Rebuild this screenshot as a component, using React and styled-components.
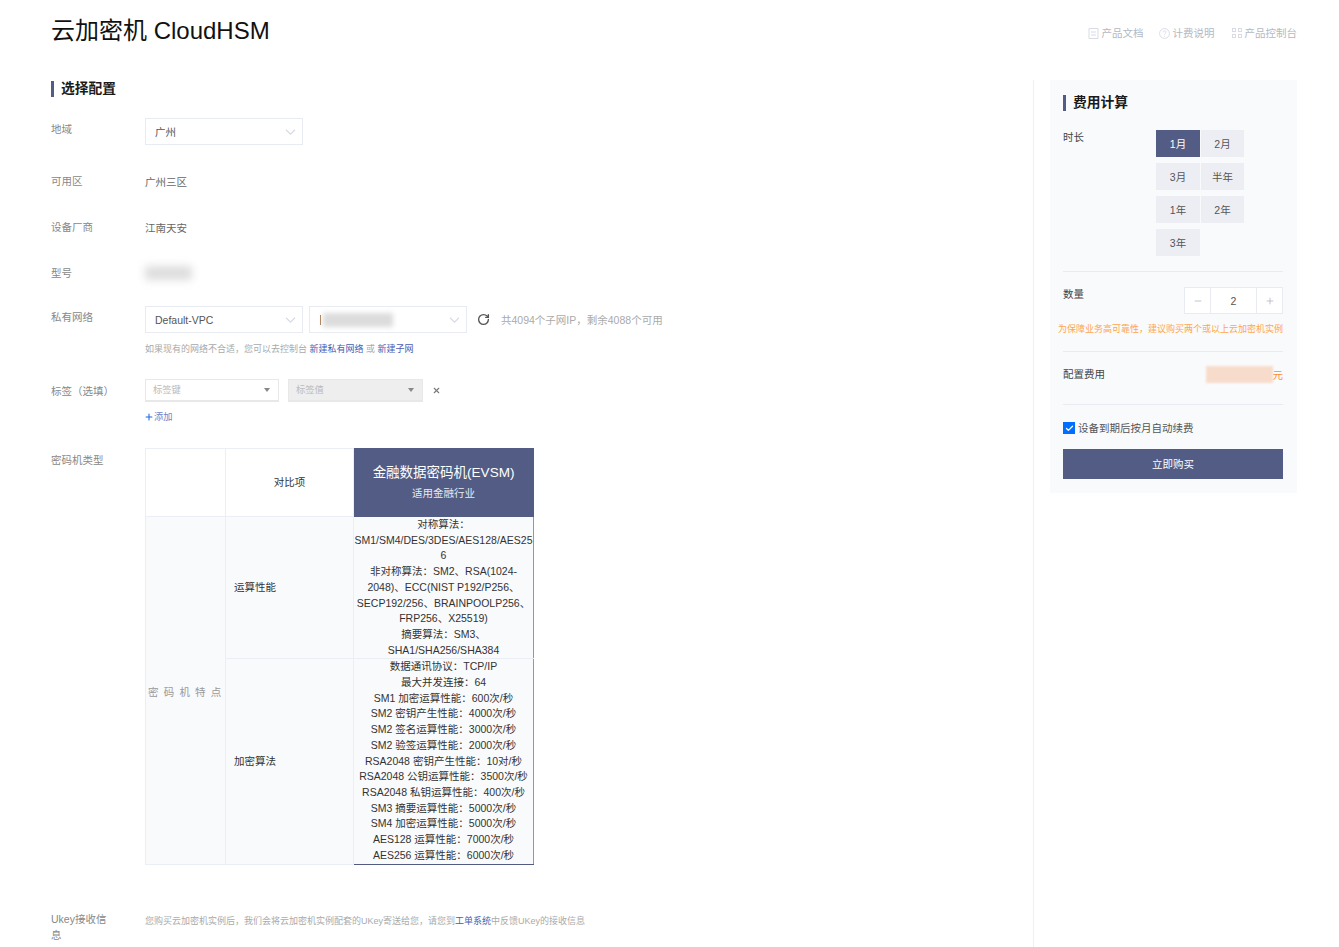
import styled, { createGlobalStyle } from "styled-components";
import { RotateCw, Check, X, Plus, Minus } from "lucide-react";

const GlobalStyle = createGlobalStyle`
  html, body {
    margin: 0;
    padding: 0;
    background: #fff;
  }
  body {
    font-family: "Liberation Sans", "Noto Sans CJK SC", sans-serif;
    font-size: 10.5px;
    line-height: 16px;
    color: #333;
  }
`;

const Page = styled.div`
  height: 947px;
  overflow: hidden;
  padding: 0 42px 0 51px;
  box-sizing: border-box;
`;

const Header = styled.header`
  height: 80px;
  padding-top: 15px;
  box-sizing: border-box;
  display: flex;
  justify-content: space-between;
  align-items: flex-start;
`;

const Title = styled.h1`
  margin: 0;
  font-size: 24px;
  line-height: 32px;
  font-weight: 400;
  color: #111;
`;

const HeaderLinks = styled.nav`
  display: flex;
  margin-top: 10px;
`;

const HeaderLink = styled.a`
  display: flex;
  align-items: center;
  gap: 3px;
  margin-right: ${(p) => p.$right || 0}px;
  color: #b4b8c4;
  svg {
    display: block;
  }
`;

const Layout = styled.div`
  display: grid;
  grid-template-columns: 983px 247px;
  gap: 16px;
  align-items: start;
`;

const Main = styled.main`
  padding-top: 1px;
  height: 900px;
  box-sizing: border-box;
  border-right: 1px solid #eef0f4;
`;

const SectionTitle = styled.h2`
  margin: 0 0 ${(p) => p.$bottom}px;
  border-left: 3px solid #525c85;
  padding-left: 7px;
  font-size: 13.75px;
  line-height: 16px;
  font-weight: 700;
  color: #1a1a1a;
`;

const Row = styled.div`
  display: grid;
  grid-template-columns: 60px 1fr;
  column-gap: 34px;
  margin-bottom: ${(p) => p.$bottom}px;
`;

const Label = styled.div`
  padding-top: ${(p) => p.$top || 3}px;
  color: #888;
`;

const Value = styled.div`
  padding-top: 4px;
  color: #666;
`;

const Inline = styled.div`
  display: flex;
  align-items: center;
  gap: ${(p) => p.$gap || 6}px;
`;

const SelectBox = styled.div`
  width: 158px;
  height: 27px;
  box-sizing: border-box;
  border: 1px solid #e9ebf3;
  padding: 0 6px 0 9px;
  background: #fff;
  display: flex;
  align-items: center;
  justify-content: space-between;
  color: #555;
`;

const Chevron = () => (
  <svg width="11" height="6" viewBox="0 0 11 6" fill="none">
    <path d="M1 .8l4.5 4.4L10 .8" stroke="#d8dbe6" strokeWidth="1.2" />
  </svg>
);

const Redacted = styled.span`
  display: block;
  width: ${(p) => p.$width}px;
  height: ${(p) => p.$height}px;
  background: ${(p) => p.$color};
  filter: blur(${(p) => p.$blur}px);
`;

const Caret = styled.span`
  width: 1px;
  height: 10px;
  margin: 0 2px 0 1px;
  background: #a9794f;
`;

const Grouped = styled.span`
  display: flex;
  align-items: center;
`;

const RefreshIcon = styled(RotateCw)`
  margin: 0 5px 0 4px;
  color: #555;
`;

const Note = styled.span`
  color: #aaa;
`;

const Hint = styled.div`
  margin-top: 8px;
  color: #aaa;
  font-size: 9px;
  a {
    color: #4a5cb4;
  }
`;

const UkeyHint = styled(Hint)`
  margin-top: 1px;
`;

const TagSelect = styled.div`
  width: ${(p) => p.$width}px;
  height: 23px;
  box-sizing: border-box;
  border: 1px solid #e8e8e8;
  border-bottom-width: 2px;
  padding: 0 8px 0 7px;
  display: flex;
  align-items: center;
  justify-content: space-between;
  color: #bbb;
  font-size: 9.3px;
  background: ${(p) => (p.$disabled ? "#eeeeee" : "#fff")};
`;

const Triangle = styled.span`
  border-left: 3px solid transparent;
  border-right: 3px solid transparent;
  border-top: 4px solid #888;
`;

const TagRemove = styled(X)`
  color: #777;
`;

const AddLink = styled.a`
  margin: 7px 0 0 -1px;
  display: flex;
  align-items: center;
  color: #7083c8;
  font-size: 9.3px;
  svg {
    color: #1668e0;
  }
`;

const SpecTable = styled.table`
  width: 388px;
  table-layout: fixed;
  border-collapse: collapse;
  color: #333;
  line-height: 15.7px;
`;

const HeadCell = styled.th`
  height: 67px;
  padding: 0;
  font-weight: 400;
  border: 1px solid #eceef5;
  background: #fff;
`;

const ProductCell = styled.th`
  padding: 0 0 2px;
  background: #525c85;
  color: #fff;
  font-weight: 400;
  border: 1px solid #525c85;
`;

const ProductName = styled.div`
  font-size: 13.5px;
  line-height: 20px;
  margin-bottom: 2px;
`;

const ProductSub = styled.div`
  font-size: 10.5px;
  line-height: 16px;
  color: #e8eaf2;
`;

const GroupCell = styled.td`
  padding: 4px 0 0 2px;
  white-space: nowrap;
  color: #999;
  letter-spacing: 5.2px;
  background: #f9fafc;
  border: 1px solid #eceef5;
`;

const NameCell = styled.td`
  padding: 0 0 0 8px;
  background: #f9fafc;
  border: 1px solid #eceef5;
`;

const SpecCell = styled.td`
  padding: 0 0 ${(p) => (p.$last ? 1 : 0)}px;
  text-align: center;
  overflow-wrap: anywhere;
  background: #f9fafc;
  border-top: 1px solid #eceef5;
  border-left: 1px solid #8f97b5;
  border-right: 1px solid #8f97b5;
  border-bottom: 1px solid ${(p) => (p.$last ? "#525c85" : "#eceef5")};
`;

const Aside = styled.aside`
  padding: 15px 14px 14px 13px;
  background: #f9fafc;
`;

const PriceRow = styled.div`
  display: grid;
  grid-template-columns: 93px 1fr;
  line-height: 14px;
`;

const PriceLabel = styled.div`
  color: #444;
`;

const DurationGrid = styled.div`
  display: grid;
  grid-template-columns: 44px 43px;
  grid-auto-rows: 27px;
  gap: 6px 1px;
`;

const DurationButton = styled.button`
  border: 0;
  padding: 0;
  font: inherit;
  color: ${(p) => (p.$active ? "#fff" : "#555")};
  background: ${(p) => (p.$active ? "#525c85" : "#edeef3")};
`;

const Divider = styled.hr`
  margin: ${(p) => p.$top}px 0 ${(p) => p.$bottom}px;
  border: 0;
  border-top: 1px solid #e9ebf2;
`;

const SpaceRow = styled.div`
  display: flex;
  justify-content: space-between;
  align-items: flex-start;
  line-height: ${(p) => p.$leading || 16}px;
  color: #444;
`;

const Stepper = styled.div`
  display: grid;
  grid-template-columns: 25px 46px 26px;
  width: 99px;
  height: 27px;
  box-sizing: border-box;
  border: 1px solid #e9ebf3;
  background: #fff;
`;

const StepCell = styled.div`
  display: flex;
  align-items: center;
  justify-content: center;
  color: ${(p) => (p.$value ? "#555" : "#b4b8c4")};
  border-left: ${(p) => (p.$first ? "0" : "1px solid #e9ebf3")};
`;

const Warning = styled.div`
  margin: 7px 0 0 -5px;
  color: #ffa64d;
  font-size: 9px;
  white-space: nowrap;
  text-align: right;
`;

const PriceValue = styled.div`
  display: flex;
  align-items: flex-end;
  color: #ff8b2d;
`;

const AutoRenew = styled.label`
  display: flex;
  align-items: center;
  gap: 3px;
  color: #555;
`;

const CheckMark = styled.span`
  width: 12px;
  height: 12px;
  background: #006eff;
  color: #fff;
  display: flex;
  align-items: center;
  justify-content: center;
`;

const BuyButton = styled.button`
  display: block;
  width: 100%;
  height: 30px;
  margin-top: 13px;
  border: 0;
  padding: 0;
  font: inherit;
  color: #fff;
  background: #525c85;
`;

const DocIcon = () => (
  <svg width="11" height="11" viewBox="0 0 11 11" fill="none" stroke="#d8dbe6">
    <path d="M1 .5h9v10H1zM3 4h5M3 7h5" />
  </svg>
);

const HelpIcon = () => (
  <svg width="11" height="11" viewBox="0 0 12 12" fill="none" stroke="#d8dbe6">
    <circle cx="6" cy="6" r="5.4" />
    <path d="M4.4 4.6C4.5 2.6 7.6 2.7 7.6 4.5 7.6 5.7 6 5.6 6 7.2M6 8.4v1" />
  </svg>
);

const GridIcon = () => (
  <svg width="10" height="10" viewBox="0 0 10 10" fill="#d8dbe6">
    <path d="M0 0h4v4H0zM1 1v2h2V1zM6 0h4v4H6zM7 1v2h2V1zM0 6h4v4H0zM1 7v2h2V7zM6 6h4v4H6zM7 7v2h2V7z" fillRule="evenodd" />
  </svg>
);

const algorithmLines = [
  "对称算法：",
  "SM1/SM4/DES/3DES/AES128/AES256",
  "非对称算法：SM2、RSA(1024-2048)、ECC(NIST P192/P256、SECP192/256、BRAINPOOLP256、FRP256、X25519)",
  "摘要算法：SM3、SHA1/SHA256/SHA384",
];

const performanceLines = [
  "数据通讯协议：TCP/IP",
  "最大并发连接：64",
  "SM1 加密运算性能：600次/秒",
  "SM2 密钥产生性能：4000次/秒",
  "SM2 签名运算性能：3000次/秒",
  "SM2 验签运算性能：2000次/秒",
  "RSA2048 密钥产生性能：10对/秒",
  "RSA2048 公钥运算性能：3500次/秒",
  "RSA2048 私钥运算性能：400次/秒",
  "SM3 摘要运算性能：5000次/秒",
  "SM4 加密运算性能：5000次/秒",
  "AES128 运算性能：7000次/秒",
  "AES256 运算性能：6000次/秒",
];

const durations = ["1月", "2月", "3月", "半年", "1年", "2年", "3年"];

const App = () => {
  return (
    <Page>
      <GlobalStyle />
      <Header>
        <Title>云加密机 CloudHSM</Title>
        <HeaderLinks>
          <HeaderLink $right={15}><DocIcon />产品文档</HeaderLink>
          <HeaderLink $right={17}><HelpIcon />计费说明</HeaderLink>
          <HeaderLink><GridIcon />产品控制台</HeaderLink>
        </HeaderLinks>
      </Header>
      <Layout>
        <Main>
          <SectionTitle $bottom={21}>选择配置</SectionTitle>
          <Row $bottom={25}>
            <Label>地域</Label>
            <SelectBox>广州<Chevron /></SelectBox>
          </Row>
          <Row $bottom={26}>
            <Label>可用区</Label>
            <Value>广州三区</Value>
          </Row>
          <Row $bottom={26}>
            <Label>设备厂商</Label>
            <Value>江南天安</Value>
          </Row>
          <Row $bottom={25}>
            <Label>型号</Label>
            <Value><Redacted $width={47} $height={14} $color="#dddddd" $blur={4} /></Value>
          </Row>
          <Row $bottom={22}>
            <Label>私有网络</Label>
            <div>
              <Inline>
                <SelectBox>Default-VPC<Chevron /></SelectBox>
                <SelectBox>
                  <Grouped>
                    <Caret />
                    <Redacted $width={70} $height={14} $color="#dcdcdc" $blur={2.5} />
                  </Grouped>
                  <Chevron />
                </SelectBox>
                <RefreshIcon size={13} strokeWidth={2.5} />
                <Note>共4094个子网IP，剩余4088个可用</Note>
              </Inline>
              <Hint>如果现有的网络不合适，您可以去控制台 <a>新建私有网络</a> 或 <a>新建子网</a></Hint>
            </div>
          </Row>
          <Row $bottom={23}>
            <Label $top={4}>标签（选填）</Label>
            <div>
              <Inline $gap={9}>
                <TagSelect $width={134}>标签键<Triangle /></TagSelect>
                <TagSelect $width={135} $disabled>标签值<Triangle /></TagSelect>
                <TagRemove size={9} strokeWidth={3} />
              </Inline>
              <AddLink><Plus size={10} strokeWidth={2.5} />添加</AddLink>
            </div>
          </Row>
          <Row $bottom={43}>
            <Label $top={4}>密码机类型</Label>
            <SpecTable>
              <colgroup>
                <col width="80" />
                <col width="128" />
                <col width="180" />
              </colgroup>
              <thead>
                <tr>
                  <HeadCell />
                  <HeadCell>对比项</HeadCell>
                  <ProductCell>
                    <ProductName>金融数据密码机(EVSM)</ProductName>
                    <ProductSub>适用金融行业</ProductSub>
                  </ProductCell>
                </tr>
              </thead>
              <tbody>
                <tr>
                  <GroupCell rowSpan={2}>密码机特点</GroupCell>
                  <NameCell>运算性能</NameCell>
                  <SpecCell>
                    {algorithmLines.map((line) => <div key={line}>{line}</div>)}
                  </SpecCell>
                </tr>
                <tr>
                  <NameCell>加密算法</NameCell>
                  <SpecCell $last>
                    {performanceLines.map((line) => <div key={line}>{line}</div>)}
                  </SpecCell>
                </tr>
              </tbody>
            </SpecTable>
          </Row>
          <Row $bottom={0}>
            <Label>Ukey接收信息</Label>
            <Value>
              <UkeyHint>
                您购买云加密机实例后，我们会将云加密机实例配套的UKey寄送给您，请您到<a>工单系统</a>中反馈UKey的接收信息
              </UkeyHint>
            </Value>
          </Row>
        </Main>
        <Aside>
          <SectionTitle $bottom={19}>费用计算</SectionTitle>
          <PriceRow>
            <PriceLabel>时长</PriceLabel>
            <DurationGrid>
              {durations.map((item, index) => (
                <DurationButton key={item} $active={index === 0}>{item}</DurationButton>
              ))}
            </DurationGrid>
          </PriceRow>
          <Divider $top={15} $bottom={15} />
          <SpaceRow $leading={14}>
            <span>数量</span>
            <Stepper>
              <StepCell $first><Minus size={10} /></StepCell>
              <StepCell $value>2</StepCell>
              <StepCell><Plus size={10} /></StepCell>
            </Stepper>
          </SpaceRow>
          <Warning>为保障业务高可靠性，建议购买两个或以上云加密机实例</Warning>
          <Divider $top={14} $bottom={14} />
          <SpaceRow>
            <span>配置费用</span>
            <PriceValue>
              <Redacted $width={67} $height={17} $color="#f8dccb" $blur={1.2} />元
            </PriceValue>
          </SpaceRow>
          <Divider $top={21} $bottom={15} />
          <AutoRenew>
            <CheckMark><Check size={9} strokeWidth={3.5} /></CheckMark>
            设备到期后按月自动续费
          </AutoRenew>
          <BuyButton>立即购买</BuyButton>
        </Aside>
      </Layout>
    </Page>
  );
};

export default App;
